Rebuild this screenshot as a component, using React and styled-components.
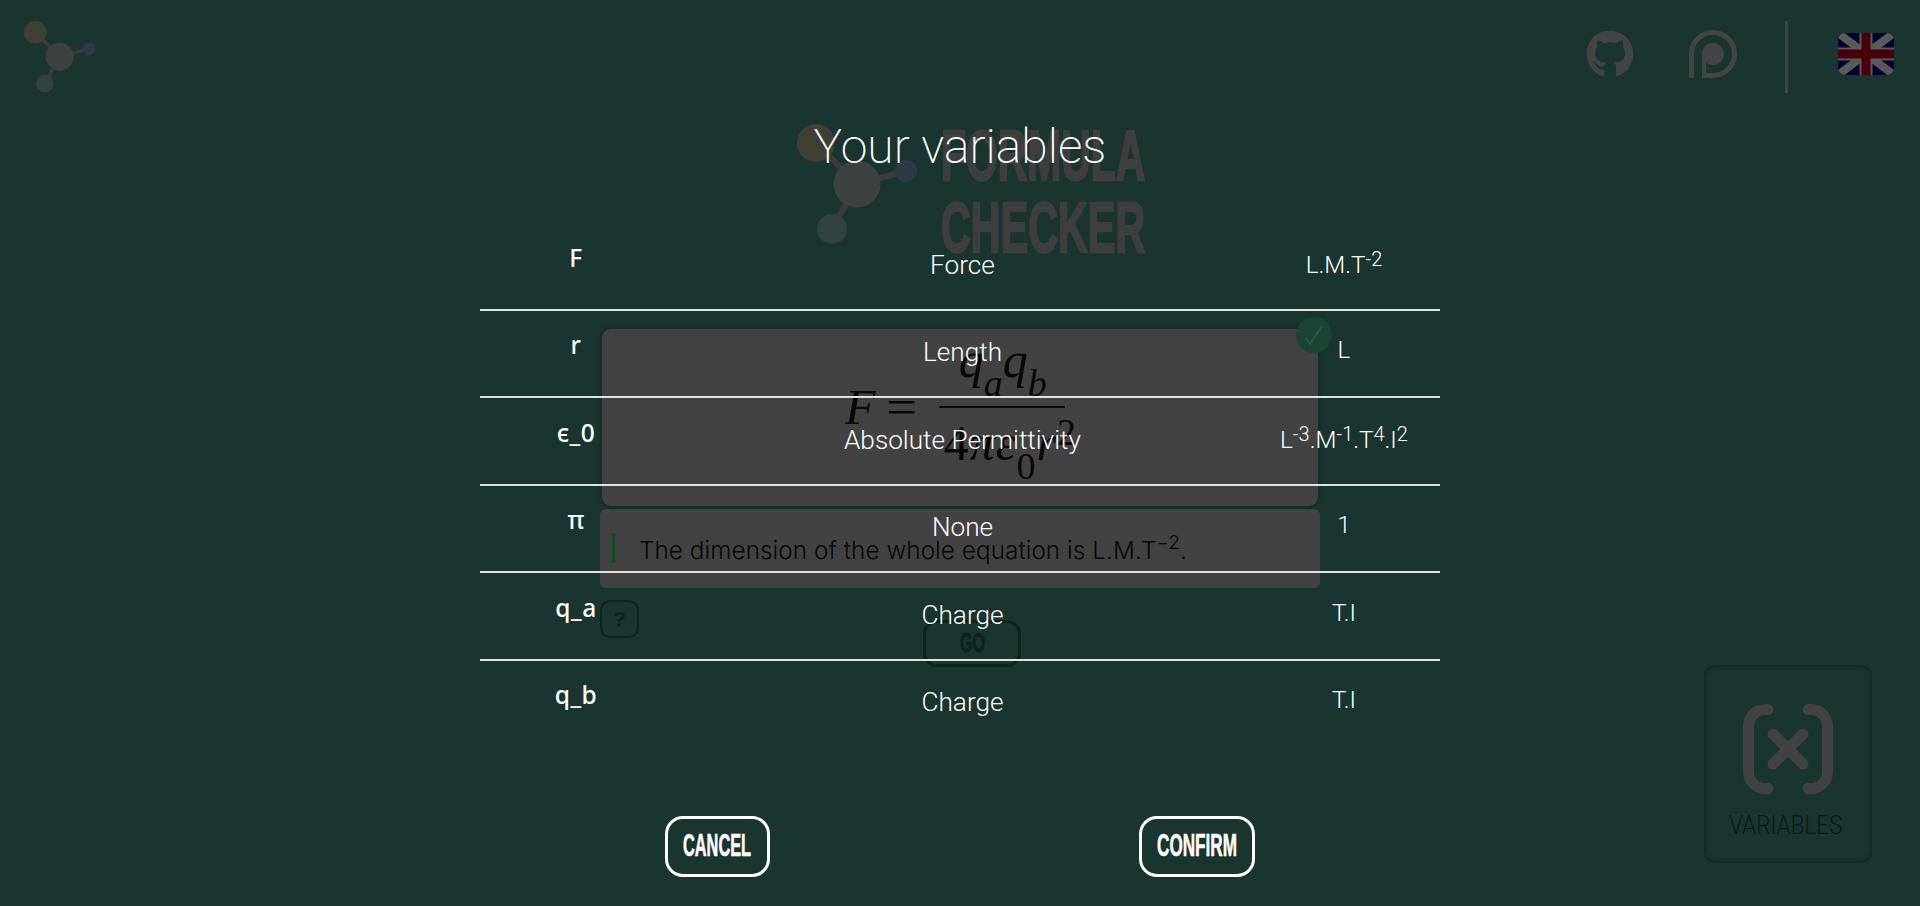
import React from 'react';
import styled, { createGlobalStyle } from 'styled-components';
import { FaGithub } from 'react-icons/fa';

const Global = createGlobalStyle`
  html, body { margin: 0; height: 100%; background: #1a3430; overflow: hidden; }
  * { box-sizing: border-box; }
`;

const Page = styled.div`
  width: 1920px; height: 906px; position: relative; overflow: hidden;
  background: #1a3430; display: flex; flex-direction: column; align-items: center;
  font-family: Roboto, sans-serif;
`;
const Header = styled.header`
  width: 100%; height: 114px; display: flex; align-items: flex-start;
  justify-content: space-between; padding: 21px 26px 0 21px;
`;
const HeaderRight = styled.div`display: flex; align-items: flex-start;`;
const IconLink = styled.span`
  display: flex; width: 48px; height: 48px; margin: 9px 0 0 ${p => p.$gap}px; color: #444;
`;
const Divider = styled.span`
  width: 3px; height: 72px; background: #444; margin: 0 50px 0 48px;
`;
const Flag = styled.svg`width: 56px; height: 42px; margin-top: 12px; border-radius: 7px; display: block;`;
const Hero = styled.div`
  margin-top: 6px; height: 144px; display: flex; align-items: flex-start; width: 353px;
  margin-left: 16px; gap: 23px;
`;
const HeroLogo = styled.svg`width: 126px; height: 126px; margin-top: 4px; flex: none;`;
const HeroTitle = styled.div`
  width: 204px; color: #3e3e3e; font: 700 70px/72px "Liberation Sans", sans-serif; flex: none;
`;
const Squeezed = styled.span`
  display: block; white-space: nowrap; transform-origin: 0 50%;
  transform: scaleX(${p => p.$x});
  -webkit-text-stroke: ${p => p.$stroke || 0}px currentColor;
`;
const FormulaCard = styled.section`
  position: relative; width: 716px; height: 177px; margin-top: 65px; background: #424242;
  border-radius: 9px; box-shadow: 0 0 5px rgba(0,0,0,.3); padding: 17px 0 0 243px;
`;
const Check = styled.span`
  position: absolute; top: -12px; right: -14px; width: 36px; height: 36px; border-radius: 50%;
  background: #1c4432; display: flex; align-items: center; justify-content: center;
`;
const Formula = styled.div`
  display: flex; align-items: center; color: #080808;
  font: 50px/1 "Liberation Serif", serif; width: 260px;
`;
const MathVar = styled.i`font-style: italic;`;
const Equals = styled.span`margin: 0 25px 0 10px; display: inline-block; transform: scaleX(1.1); transform-origin: 0 50%;`;
const Fraction = styled.div`width: 126px; flex: none; display: flex; flex-direction: column;`;
const Num = styled.div`
  height: 60px; line-height: 28px; text-align: center; white-space: nowrap; padding-left: 2px;
`;
const Bar = styled.div`height: 2px; background: #080808;`;
const Den = styled.div`
  height: 60px; line-height: 70px; text-align: left; white-space: nowrap; padding-left: 5px; letter-spacing: 1px;
`;
const Low = styled.span`font-size: 38px; vertical-align: -19px; line-height: 0; font-style: ${p => p.$i ? 'italic' : 'normal'};`;
const High = styled.span`font-size: 38px; vertical-align: 15px; line-height: 0;`;
const DimensionCard = styled.section`
  width: 720px; height: 79px; margin-top: 3px; background: #424242; border-radius: 6px;
  display: flex; align-items: flex-start; padding: 24px 0 0 12px;
`;
const Accent = styled.span`width: 3px; height: 30px; background: #124a24; margin-right: 24px;`;
const DimText = styled.p`
  margin: 1px 0 0; font: 300 24.3px/32px Inter, sans-serif; color: #080808; letter-spacing: .05px;
  sup { font-size: 19px; line-height: 0; vertical-align: 10px; }
`;
const ToolRow = styled.div`width: 720px; display: flex; align-items: flex-start;`;
const HelpButton = styled.span`
  width: 39px; height: 38px; margin-top: 12px; border: 2.5px solid #0c241c; border-radius: 10px;
  display: flex; align-items: center; justify-content: center;
  color: #0c241c; font: 700 20px "Liberation Sans", sans-serif;
`;
const GoButton = styled.span`
  width: 98px; height: 47px; margin: 32px 0 0 284px; border: 3px solid #0c241c; border-radius: 14px;
  display: flex; align-items: center; justify-content: center; color: #0c241c;
  font: 700 27px "Liberation Sans", sans-serif;
`;
const VariablesCard = styled.aside`
  position: absolute; left: 1704px; top: 665px; width: 168px; height: 198px; border-radius: 12px;
  box-shadow: inset 0 0 5px 1px #11241f; padding-top: 39px; display: flex; flex-direction: column;
  align-items: center; background: #1a3430;
`;
const VarIcon = styled.svg`width: 90px; height: 90px; flex: none;`;
const VarLabel = styled.div`
  margin: 17px 0 0 -6px; color: #0a1a18; font: 300 25px/30px Roboto, sans-serif; width: 113px;
`;
const Modal = styled.div`
  position: absolute; inset: 0; display: flex; flex-direction: column; align-items: center;
  padding-top: 111px; color: #fff;
`;
const Title = styled.h1`
  margin: 0 0 40px; font: 200 48px/72px Roboto, sans-serif; color: #fff;
`;
const Table = styled.div`width: 960px; display: flex; flex-direction: column;`;
const Row = styled.div`
  height: 87.5px; display: grid; grid-template-columns: 192px 576px 192px; align-items: center;
  text-align: center; padding-bottom: 2px; border-bottom: 2px solid ${p => p.$last ? 'transparent' : '#e2e2e2'};
`;
const Name = styled.div`
  font: 500 24.5px/30px "Noto Sans", sans-serif; padding-bottom: 14px; letter-spacing: .5px;
`;
const Desc = styled.div`font: 300 26.2px/32px Roboto, sans-serif; padding-left: 5px;`;
const Dim = styled.div`
  font: 300 24.2px/32px Roboto, sans-serif; padding-bottom: 4px;
  sup { font-size: 20px; vertical-align: 7px; line-height: 30px; }
`;
const Actions = styled.div`display: flex; gap: 369px; margin-top: 68px; margin-right: 1px;`;
const ActionButton = styled.span`
  width: ${p => p.$w}px; height: 61px; border: 3px solid #fff; border-radius: 18px;
  display: flex; align-items: center; justify-content: center; color: #fff; padding-bottom: 2px;
  font: 700 31px "Liberation Sans", sans-serif;
`;
const ButtonLabel = styled.span`
  display: block; width: ${p => p.$w}px; white-space: nowrap; transform-origin: 0 50%;
  transform: scaleX(${p => p.$x}); -webkit-text-stroke: .6px currentColor;
`;

const MoleculeShapes = () => (
  <>
    <path d="M24 19L65 60M65 60L114 47M65 60L40 105" stroke="#3e3a3a" strokeWidth="6" />
    <circle cx="24" cy="19" r="19" fill="#3f4034" />
    <circle cx="65" cy="60" r="23.5" fill="#3d423f" />
    <circle cx="114" cy="47" r="11" fill="#2b3a46" />
    <circle cx="40" cy="105" r="15" fill="#314240" />
  </>
);

const rows = [
  ['F', 'Force', <>L.M.T<sup>-2</sup></>],
  ['r', 'Length', 'L'],
  ['ϵ_0', 'Absolute Permittivity', <>L<sup>-3</sup>.M<sup>-1</sup>.T<sup>4</sup>.I<sup>2</sup></>],
  ['π', 'None', '1'],
  ['q_a', 'Charge', 'T.I'],
  ['q_b', 'Charge', 'T.I'],
];

export default function App() {
  return (
    <Page>
      <Global />
      <Header>
        <svg width="75" height="75" viewBox="0 0 126 126" style={{ display: 'block' }}>
          <MoleculeShapes />
        </svg>
        <HeaderRight>
          <IconLink $gap={0}><FaGithub size={48} /></IconLink>
          <IconLink $gap={55}>
            <svg width="48" height="48" viewBox="0 0 48 48" fill="none">
              <path d="M2.5 48V24A21.5 21.5 0 1 1 24 45.5H15" stroke="#444" strokeWidth="5" />
              <circle cx="24" cy="24" r="11" fill="#444" />
              <path d="M13 24h4v24h-4z" fill="#444" />
            </svg>
          </IconLink>
          <Divider />
          <Flag viewBox="0 0 56 42">
            <rect width="56" height="42" fill="#00002e" />
            <path d="M0 0L56 42M56 0L0 42" stroke="#5a5a5a" strokeWidth="8" />
            <path d="M28 0V42M0 21H56" stroke="#5a5a5a" strokeWidth="13" />
            <path d="M28 0V42M0 21H56" stroke="#48000a" strokeWidth="9" />
          </Flag>
        </HeaderRight>
      </Header>
      <Hero>
        <HeroLogo viewBox="0 0 126 126"><MoleculeShapes /></HeroLogo>
        <HeroTitle>
          <Squeezed $x={0.584} $stroke={2.5}>FORMULA</Squeezed>
          <Squeezed $x={0.59} $stroke={2.5}>CHECKER</Squeezed>
        </HeroTitle>
      </Hero>
      <FormulaCard>
        <Formula>
          <MathVar>F</MathVar>
          <Equals>=</Equals>
          <Fraction>
            <Num><MathVar>q</MathVar><Low $i>a</Low><MathVar>q</MathVar><Low $i>b</Low></Num>
            <Bar />
            <Den>4<MathVar>πε</MathVar><Low>0</Low><MathVar>r</MathVar><High>2</High></Den>
          </Fraction>
        </Formula>
        <Check>
          <svg width="22" height="22" viewBox="0 0 22 22" fill="none">
            <path d="M3 14l4 6L19 2" stroke="#2f5543" strokeWidth="2" />
          </svg>
        </Check>
      </FormulaCard>
      <DimensionCard>
        <Accent />
        <DimText>The dimension of the whole equation is L.M.T<sup>−2</sup>.</DimText>
      </DimensionCard>
      <ToolRow>
        <HelpButton>?</HelpButton>
        <GoButton><Squeezed $x={0.6} $stroke={1} style={{ width: 24 }}>GO</Squeezed></GoButton>
      </ToolRow>
      <VariablesCard>
        <VarIcon viewBox="0 0 90 90" fill="none" stroke="#424242" strokeWidth="11" strokeLinecap="round">
          <path d="M25 5.5H22A16.5 16.5 0 0 0 5.5 22V68A16.5 16.5 0 0 0 22 84.5H25" />
          <path d="M65 5.5H68A16.5 16.5 0 0 1 84.5 22V68A16.5 16.5 0 0 1 68 84.5H65" />
          <path d="M30 30L60 60M60 30L30 60" />
        </VarIcon>
        <VarLabel><Squeezed $x={0.9}>VARIABLES</Squeezed></VarLabel>
      </VariablesCard>
      <Modal>
        <Title>Your variables</Title>
        <Table>
          {rows.map((r, i) => (
            <Row key={i} $last={i === rows.length - 1}>
              <Name>{r[0]}</Name>
              <Desc>{r[1]}</Desc>
              <Dim>{r[2]}</Dim>
            </Row>
          ))}
        </Table>
        <Actions>
          <ActionButton $w={105}><ButtonLabel $w={68} $x={0.527}>CANCEL</ButtonLabel></ActionButton>
          <ActionButton $w={116}><ButtonLabel $w={80} $x={0.553}>CONFIRM</ButtonLabel></ActionButton>
        </Actions>
      </Modal>
    </Page>
  );
}
